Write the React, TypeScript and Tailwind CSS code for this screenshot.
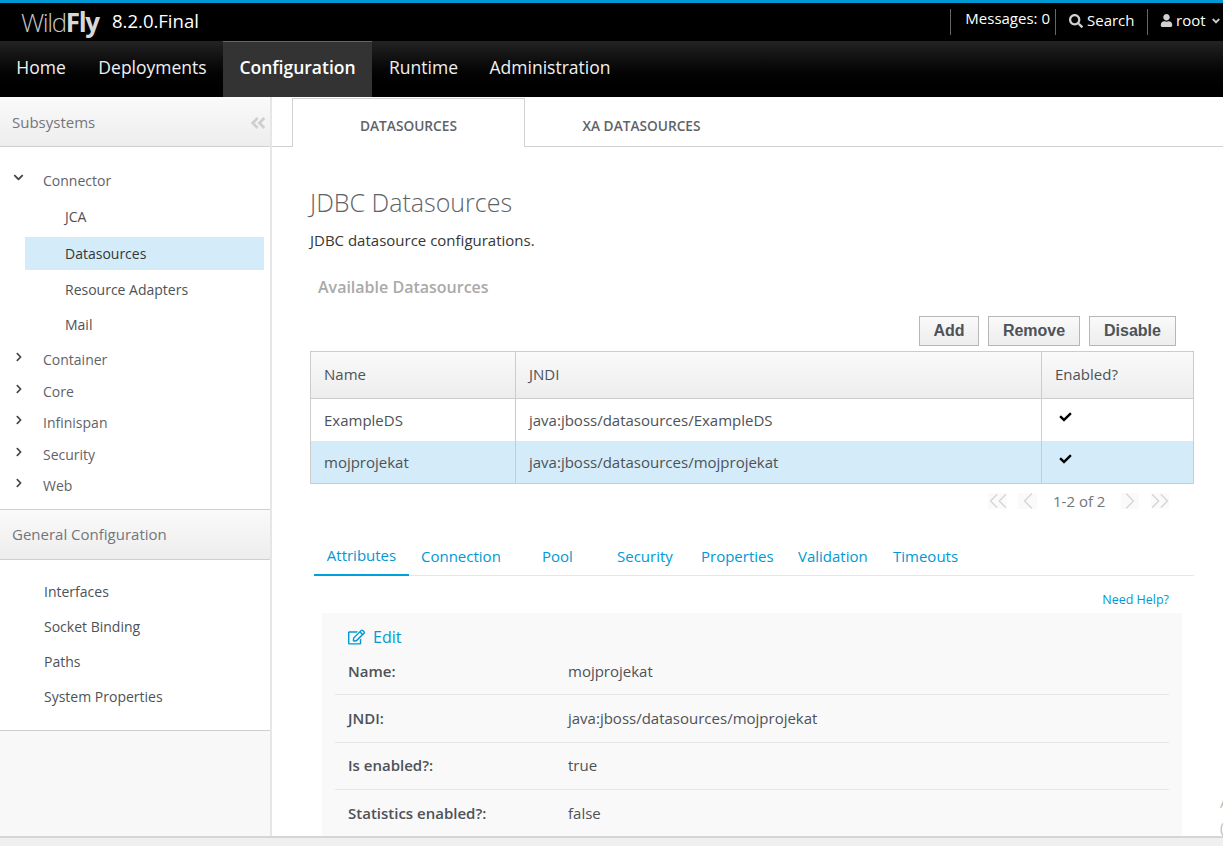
import { ChevronLeft, ChevronRight, ChevronsLeft, ChevronsRight } from "lucide-react";
import { FaAngleDoubleLeft, FaAngleDown, FaCheck, FaChevronDown, FaChevronRight, FaRegEdit, FaSearch, FaUser } from "react-icons/fa";

const navItems = [
  { label: "Home", width: "w-[82px]" },
  { label: "Deployments", width: "w-[141px]" },
  { label: "Configuration", width: "w-[149px]", active: true },
  { label: "Runtime", width: "w-[103px]" },
  { label: "Administration", width: "w-[150px]" },
];

const connectorChildren = [
  { label: "JCA", rowClass: "h-[39px] pb-[3px]" },
  { label: "Datasources", rowClass: "h-[33px] pb-[1px]", active: true },
  { label: "Resource Adapters", rowClass: "h-[38px]" },
  { label: "Mail", rowClass: "h-[32px]" },
];

const subsystems = [
  { label: "Container", rowClass: "h-[33px]" },
  { label: "Core", rowClass: "h-[31px]" },
  { label: "Infinispan", rowClass: "h-[32px] pb-[1px]" },
  { label: "Security", rowClass: "h-[31px]" },
  { label: "Web", rowClass: "h-[32px] pb-[1px]" },
];

const generalConfig = ["Interfaces", "Socket Binding", "Paths", "System Properties"];

const datasources = [
  { name: "ExampleDS", jndi: "java:jboss/datasources/ExampleDS", selected: false },
  { name: "mojprojekat", jndi: "java:jboss/datasources/mojprojekat", selected: true },
];

const detailTabs = [
  { label: "Attributes", width: "w-[95px]", active: true },
  { label: "Connection", width: "w-[121px]" },
  { label: "Pool", width: "w-[75px]" },
  { label: "Security", width: "w-[84px]" },
  { label: "Properties", width: "w-[97px]" },
  { label: "Validation", width: "w-[95px]" },
  { label: "Timeouts", width: "w-[90px]" },
];

const attributes = [
  { label: "Name:", value: "mojprojekat", rowClass: "h-[48px] pt-[1px]" },
  { label: "JNDI:", value: "java:jboss/datasources/mojprojekat", rowClass: "h-[48px]" },
  { label: "Is enabled?:", value: "true", rowClass: "h-[47px] pb-[1px]" },
  { label: "Statistics enabled?:", value: "false", rowClass: "h-[47px]" },
];

function TopBar() {
  return (
    <div className="flex h-[41px] items-center border-t-[3px] border-[#0099d3] bg-black text-white">
      <div className="ml-[21px] flex w-[79px] items-baseline text-[26px] leading-none tracking-[-1.4px] text-[#c4c4c4]">
        <span className="font-light">Wild</span>
        <span className="font-bold text-[#d8d8d8]">Fly</span>
      </div>
      <span className="relative -top-[1px] ml-[12px] text-[18.5px]">8.2.0.Final</span>
      <div className="ml-auto flex h-[26px] items-center text-[15px]">
        <div className="flex h-full items-center border-l border-[#666] pl-[14px] pr-[5px]">
          <span className="relative -top-[4px]">Messages: 0</span>
        </div>
        <div className="flex h-full w-[92px] items-center gap-[4px] border-l border-[#666] pb-[3px] pl-[13px]">
          <FaSearch className="h-[14px] w-[14px] text-[#d1d1d1]" />
          <span>Search</span>
        </div>
        <div className="flex h-full w-[76px] items-center border-l border-[#666] pb-[3px] pl-[12px]">
          <FaUser className="h-[13px] w-[13px] text-[#d1d1d1]" />
          <span className="ml-[3px]">root</span>
          <FaAngleDown className="ml-[4px] h-[12px] w-[12px] text-[#d1d1d1]" />
        </div>
      </div>
    </div>
  );
}

function NavBar() {
  return (
    <div className="flex h-[56px] bg-gradient-to-b from-[#232323] to-[#000000]">
      {navItems.map((item) => (
        <div
          key={item.label}
          className={`flex items-center justify-center pb-[4px] text-[17.5px] ${item.width} ${
            item.active
              ? "border-t border-[#666] bg-[#333333] font-semibold text-white"
              : "text-[#f0f0f0]"
          }`}
        >
          {item.label}
        </div>
      ))}
    </div>
  );
}

function Sidebar() {
  return (
    <div className="flex w-[272px] shrink-0 flex-col border-r-2 border-[#e6e6e6] bg-[#f8f8f8] text-[14px] text-[#4d5258]">
      <div className="flex h-[50px] items-center justify-between border-b border-[#cfcfcf] bg-gradient-to-b from-[#fafafa] to-[#ededed] pl-[12px] pr-[3px] pt-[2px] text-[15px] text-[#72767b]">
        <span>Subsystems</span>
        <FaAngleDoubleLeft className="h-[18px] w-[18px] text-[#cfcfcf]" />
      </div>
      <div className="bg-white pt-[15px] pb-[7px]">
        <div className="flex h-[36px] items-center">
          <FaChevronDown className="ml-[13px] -mt-[5px] h-[11px] w-[11px] text-[#444]" />
          <span className="ml-[19px] text-[#5f6368]">Connector</span>
        </div>
        {connectorChildren.map((child) => (
          <div
            key={child.label}
            className={`ml-[25px] mr-[6px] flex items-center pl-[40px] ${child.rowClass} ${
              child.active ? "bg-[#d4ecf9] font-medium text-[#363636]" : "text-[#4d5258]"
            }`}
          >
            {child.label}
          </div>
        ))}
        <div className="h-[3px]" />
        {subsystems.map((item) => (
          <div key={item.label} className={`flex items-center ${item.rowClass}`}>
            <FaChevronRight className="ml-[14px] -mt-[5px] h-[10px] w-[10px] text-[#444]" />
            <span className="ml-[19px] text-[#5f6368]">{item.label}</span>
          </div>
        ))}
      </div>
      <div className="flex h-[51px] items-center border-y border-[#cfcfcf] bg-gradient-to-b from-[#fafafa] to-[#ededed] pl-[12px] text-[15px] text-[#72767b]">
        General Configuration
      </div>
      <div className="border-b border-[#cfcfcf] bg-white pt-[14px] pb-[16px]">
        {generalConfig.map((label) => (
          <div key={label} className="flex h-[35px] items-center pl-[44px]">
            {label}
          </div>
        ))}
      </div>
    </div>
  );
}

function PageButton({ children, className = "" }: { children: string; className?: string }) {
  return (
    <button
      className={`flex h-[30px] items-center justify-center border border-[#b7b7b7] bg-gradient-to-b from-[#fafafa] to-[#ededed] font-['Liberation_Sans',sans-serif] text-[16px] font-bold text-[#4d5258] ${className}`}
    >
      {children}
    </button>
  );
}

function DatasourceTable() {
  return (
    <div className="w-[884px] border-x-[1.5px] border-y-[1.5px] border-[#cccccc] text-[15px] text-[#4d5258]">
      <div className="flex h-[47px] border-b border-[#cccccc] bg-gradient-to-b from-[#fafafa] to-[#ededed]">
        <div className="flex w-[205px] items-center border-r border-[#cccccc] pb-[1px] pl-[13px]">Name</div>
        <div className="flex w-[526px] items-center border-r border-[#cccccc] pb-[1px] pl-[13px]">JNDI</div>
        <div className="flex flex-1 items-center pb-[1px] pl-[13px]">Enabled?</div>
      </div>
      {datasources.map((row) => (
        <div key={row.name} className={`flex h-[42px] ${row.selected ? "bg-[#d4ecf9]" : "bg-white"}`}>
          <div className="flex w-[205px] items-center border-r border-[#cccccc] pl-[13px]">{row.name}</div>
          <div className="flex w-[526px] items-center border-r border-[#cccccc] pl-[13px]">{row.jndi}</div>
          <div className="flex flex-1 items-center pb-[6px] pl-[17px] text-black">
            <FaCheck className="h-[12px] w-[13px]" />
          </div>
        </div>
      ))}
    </div>
  );
}

function Pager() {
  return (
    <div className="mt-[5px] flex h-[24px] w-[884px] items-center pl-[678px] text-[15px] text-[#72767b]">
      <div className="flex h-[16px] w-[19px] items-center justify-center bg-[#fafafa]">
        <ChevronsLeft className="h-[30px] w-[30px] shrink-0 text-[#d5d5d5]" strokeWidth={1.1} />
      </div>
      <div className="ml-[11px] flex h-[16px] w-[19px] items-center justify-center bg-[#fafafa]">
        <ChevronLeft className="h-[28px] w-[28px] shrink-0 text-[#d5d5d5]" strokeWidth={1.1} />
      </div>
      <span className="ml-[16px] w-[68px]">1-2 of 2</span>
      <div className="flex h-[16px] w-[18px] items-center justify-center bg-[#fafafa]">
        <ChevronRight className="h-[28px] w-[28px] shrink-0 text-[#d5d5d5]" strokeWidth={1.1} />
      </div>
      <div className="ml-[12px] flex h-[16px] w-[18px] items-center justify-center bg-[#fafafa]">
        <ChevronsRight className="h-[30px] w-[30px] shrink-0 text-[#d5d5d5]" strokeWidth={1.1} />
      </div>
    </div>
  );
}

function DetailTabs() {
  return (
    <div className="ml-[4px] mt-[17px] flex h-[46px] w-[880px] border-b border-[#e6e6e6] text-[15px] text-[#0099d3]">
      {detailTabs.map((tab) => (
        <div
          key={tab.label}
          className={`flex items-center ${tab.width} ${
            tab.active
              ? "-mb-px justify-center border-b-2 border-[#00a0dc] pt-[6px]"
              : "pl-[12px] pt-[7px]"
          }`}
        >
          {tab.label}
        </div>
      ))}
    </div>
  );
}

function AttributesPanel() {
  return (
    <div className="ml-[12px] w-[860px] flex-1 bg-[#f9f9f9] pl-[13px] pr-[13px] text-[15px] text-[#4d5258]">
      <div className="flex h-[34px] items-center gap-[8px] pl-[13px] pt-[14px] text-[16px] text-[#0099d3]">
        <FaRegEdit className="h-[16px] w-[17px]" />
        <span>Edit</span>
      </div>
      {attributes.map((attr, index) => (
        <div
          key={attr.label}
          className={`flex items-center pl-[13px] ${attr.rowClass} ${
            index < attributes.length - 1 ? "border-b border-[#e6e6e6]" : ""
          }`}
        >
          <span className="w-[220px] font-semibold">{attr.label}</span>
          <span>{attr.value}</span>
        </div>
      ))}
    </div>
  );
}

function MainContent() {
  return (
    <div className="relative flex min-w-0 flex-1 flex-col overflow-hidden bg-white">
      <div className="flex h-[50px] shrink-0 border-b border-[#d1d1d1] pl-[20px] text-[13.7px] font-semibold text-[#5f6368]">
        <div className="-mb-px mt-[1px] flex w-[233px] items-center justify-center border-x border-t border-[#d1d1d1] bg-white pt-[7px]">
          DATASOURCES
        </div>
        <div className="flex w-[233px] items-center justify-center pt-[9px]">XA DATASOURCES</div>
      </div>
      <div className="flex flex-1 flex-col pl-[38px]">
        <h1 className="mt-[37px] text-[25px] font-light leading-[36px] text-[#5f6368]">JDBC Datasources</h1>
        <p className="mt-[10px] text-[15px] leading-[20px] text-[#363636]">JDBC datasource configurations.</p>
        <h2 className="ml-[8px] mt-[27px] text-[16px] font-semibold leading-[20px] text-[#a9a9a9]">
          Available Datasources
        </h2>
        <div className="mt-[19px] flex h-[30px] w-[866px] justify-end gap-[9px]">
          <PageButton className="w-[60px]">Add</PageButton>
          <PageButton className="w-[92px]">Remove</PageButton>
          <PageButton className="w-[87px]">Disable</PageButton>
        </div>
        <div className="mt-[5px]">
          <DatasourceTable />
        </div>
        <Pager />
        <DetailTabs />
        <div className="flex h-[37px] w-[859px] items-center justify-end pt-[12px] text-[12.5px] text-[#0099d3]">
          Need Help?
        </div>
        <AttributesPanel />
      </div>
      <span className="absolute left-[948px] top-[699px] text-[14px] leading-none text-[#bbbbbb]">A</span>
      <span className="absolute left-[948px] top-[724px] text-[14px] leading-none text-[#bbbbbb]">(</span>
    </div>
  );
}

export default function App() {
  return (
    <div className="flex h-[846px] w-[1223px] flex-col overflow-hidden bg-white font-['Open_Sans',sans-serif]">
      <TopBar />
      <NavBar />
      <div className="flex min-h-0 flex-1">
        <Sidebar />
        <MainContent />
      </div>
      <div className="h-[10px] shrink-0 border-t-2 border-[#d5d5d5] bg-[#f0f0f0]" />
    </div>
  );
}
